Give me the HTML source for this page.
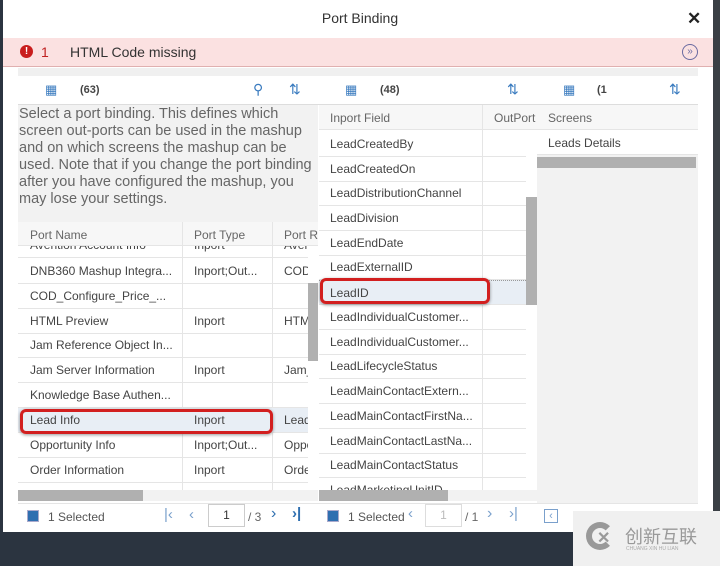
<!DOCTYPE html>
<html><head><meta charset="utf-8"><style>
*{margin:0;padding:0;box-sizing:border-box}
body{width:720px;height:566px;overflow:hidden;background:#2b3440;font-family:"Liberation Sans",sans-serif;position:relative;color:#333}
.a{position:absolute;white-space:nowrap}
.dlg{left:3px;top:0;width:710px;height:532px;background:#fff}
.t{font-size:12px;color:#444;white-space:nowrap}
.row{position:absolute;height:25px;border-bottom:1px solid #e5e5e5}
.hd{color:#666;font-size:12px}
.ico{color:#3a7bbf;font-size:13px}
</style></head><body>
<div class="a" style="left:713px;top:0;width:7px;height:532px;background:#3a3f45"></div>
<div class="a dlg"></div>
<div class="a" style="top:10px;width:360px;text-align:center;left:180px;font-size:14px;color:#333">Port Binding</div>
<div class="a" style="left:687px;top:9px;font-size:17px;font-weight:bold;color:#222">✕</div>
<div class="a" style="left:3px;top:38px;width:710px;height:29px;background:#fbe1e1;border-bottom:1px solid #e0b0b0"></div>
<div class="a" style="left:20px;top:45px;width:13px;height:13px;border-radius:50%;background:#c91d1d;color:#fff;font-size:10px;font-weight:bold;text-align:center;line-height:13px">!</div>
<div class="a" style="left:41px;top:44px;font-size:14px;color:#c02020">1</div>
<div class="a" style="left:70px;top:44px;font-size:14px;color:#333">HTML Code missing</div>
<div class="a" style="left:682px;top:44px;width:16px;height:16px;border:1px solid #6a6aa0;border-radius:50%;font-size:10px;color:#6a6aa0;text-align:center;line-height:14px">»</div>
<div class="a" style="left:18px;top:68px;width:680px;height:8px;background:#f0f0f0"></div>
<div class="a ico" style="left:45px;top:82px">▦</div>
<div class="a t" style="left:80px;top:84px;font-weight:bold;font-size:11px">(63)</div>
<div class="a ico" style="left:253px;top:81px;font-size:14px">⚲</div>
<div class="a ico" style="left:289px;top:81px;font-size:14px">⇅</div>
<div class="a ico" style="left:345px;top:82px">▦</div>
<div class="a t" style="left:380px;top:84px;font-weight:bold;font-size:11px">(48)</div>
<div class="a ico" style="left:507px;top:81px;font-size:14px">⇅</div>
<div class="a ico" style="left:563px;top:82px">▦</div>
<div class="a t" style="left:597px;top:84px;font-weight:bold;font-size:11px">(1</div>
<div class="a ico" style="left:669px;top:81px;font-size:14px">⇅</div>
<div class="a" style="left:18px;top:104px;width:680px;border-top:1px solid #ddd"></div>
<div class="a" style="left:18px;top:105px;width:300px;height:117px;background:#f2f2f2"></div>
<div class="a" style="left:19px;top:106px;width:300px;font-size:14.5px;line-height:17px;color:#666;white-space:normal">Select a port binding. This defines which screen out-ports can be used in the mashup and on which screens the mashup can be used. Note that if you change the port binding after you have configured the mashup, you may lose your settings.</div>
<div class="a" style="left:18px;top:222px;width:300px;height:268px;overflow:hidden;background:#fff">
<div class="row" style="left:0;top:0;width:300px;height:24px;background:#f7f7f7"></div>
<div class="a hd" style="left:12px;top:6px">Port Name</div><div class="a hd" style="left:176px;top:6px">Port Type</div><div class="a hd" style="left:266px;top:6px">Port Re</div>
<div class="a" style="left:164px;top:0;height:268px;border-left:1px solid #e5e5e5"></div>
<div class="a" style="left:254px;top:0;height:268px;border-left:1px solid #e5e5e5"></div>
<div class="a" style="left:0;top:24px;width:290px;height:244px;overflow:hidden">
<div class="row" style="top:-13px;width:290px"><span class="a t" style="left:12px;top:5px">Avention Account Info</span><span class="a t" style="left:176px;top:5px">Inport</span><span class="a t" style="left:266px;top:5px">Aven</span></div>
<div class="row" style="top:13px;width:290px"><span class="a t" style="left:12px;top:5px">DNB360 Mashup Integra...</span><span class="a t" style="left:176px;top:5px">Inport;Out...</span><span class="a t" style="left:266px;top:5px">COD</span></div>
<div class="row" style="top:38px;width:290px"><span class="a t" style="left:12px;top:5px">COD_Configure_Price_...</span></div>
<div class="row" style="top:63px;width:290px"><span class="a t" style="left:12px;top:5px">HTML Preview</span><span class="a t" style="left:176px;top:5px">Inport</span><span class="a t" style="left:266px;top:5px">HTM</span></div>
<div class="row" style="top:87px;width:290px"><span class="a t" style="left:12px;top:5px">Jam Reference Object In...</span></div>
<div class="row" style="top:112px;width:290px"><span class="a t" style="left:12px;top:5px">Jam Server Information</span><span class="a t" style="left:176px;top:5px">Inport</span><span class="a t" style="left:266px;top:5px">Jam_</span></div>
<div class="row" style="top:137px;width:290px"><span class="a t" style="left:12px;top:5px">Knowledge Base Authen...</span></div>
<div class="row" style="top:162px;width:290px;background:#e8eef5"><span class="a t" style="left:12px;top:5px">Lead Info</span><span class="a t" style="left:176px;top:5px">Inport</span><span class="a t" style="left:266px;top:5px">Lead</span></div>
<div class="row" style="top:187px;width:290px"><span class="a t" style="left:12px;top:5px">Opportunity Info</span><span class="a t" style="left:176px;top:5px">Inport;Out...</span><span class="a t" style="left:266px;top:5px">Oppo</span></div>
<div class="row" style="top:212px;width:290px"><span class="a t" style="left:12px;top:5px">Order Information</span><span class="a t" style="left:176px;top:5px">Inport</span><span class="a t" style="left:266px;top:5px">Orde</span></div>
</div></div>
<div class="a" style="left:308px;top:283px;width:10px;height:78px;background:#b0b0b0"></div>
<div class="a" style="left:18px;top:490px;width:300px;height:11px;background:#f2f2f2"></div>
<div class="a" style="left:18px;top:490px;width:125px;height:11px;background:#b0b0b0"></div>
<div class="a" style="left:20px;top:409px;width:253px;height:25px;border:3px solid #d21f1f;border-radius:6px;box-shadow:0 1px 3px rgba(0,0,0,.4)"></div>
<div class="a" style="left:319px;top:105px;width:218px;height:385px;overflow:hidden;background:#fff">
<div class="row" style="left:0;top:0;width:218px;height:25px;background:#f7f7f7"></div>
<div class="a hd" style="left:11px;top:6px">Inport Field</div><div class="a hd" style="left:175px;top:6px">OutPort</div>
<div class="a" style="left:163px;top:0;height:385px;border-left:1px solid #e5e5e5"></div>
<div class="a" style="left:0;top:27px;width:207px;height:358px">
<div class="row" style="top:0;width:207px"><span class="a t" style="left:11px;top:5px">LeadCreatedBy</span></div>
<div class="row" style="top:25px;width:207px"><span class="a t" style="left:11px;top:5px">LeadCreatedOn</span></div>
<div class="row" style="top:49px;width:207px"><span class="a t" style="left:11px;top:5px">LeadDistributionChannel</span></div>
<div class="row" style="top:74px;width:207px"><span class="a t" style="left:11px;top:5px">LeadDivision</span></div>
<div class="row" style="top:99px;width:207px"><span class="a t" style="left:11px;top:5px">LeadEndDate</span></div>
<div class="row" style="top:123px;width:207px"><span class="a t" style="left:11px;top:5px">LeadExternalID</span></div>
<div class="row" style="top:148px;width:207px;background:#e8eef5;border-top:1px dotted #999"><span class="a t" style="left:11px;top:5px">LeadID</span></div>
<div class="row" style="top:173px;width:207px"><span class="a t" style="left:11px;top:5px">LeadIndividualCustomer...</span></div>
<div class="row" style="top:198px;width:207px"><span class="a t" style="left:11px;top:5px">LeadIndividualCustomer...</span></div>
<div class="row" style="top:222px;width:207px"><span class="a t" style="left:11px;top:5px">LeadLifecycleStatus</span></div>
<div class="row" style="top:247px;width:207px"><span class="a t" style="left:11px;top:5px">LeadMainContactExtern...</span></div>
<div class="row" style="top:272px;width:207px"><span class="a t" style="left:11px;top:5px">LeadMainContactFirstNa...</span></div>
<div class="row" style="top:297px;width:207px"><span class="a t" style="left:11px;top:5px">LeadMainContactLastNa...</span></div>
<div class="row" style="top:321px;width:207px"><span class="a t" style="left:11px;top:5px">LeadMainContactStatus</span></div>
<div class="row" style="top:346px;width:207px"><span class="a t" style="left:11px;top:5px">LeadMarketingUnitID</span></div>
</div>
<div class="a" style="left:207px;top:92px;width:11px;height:108px;background:#b0b0b0"></div>
</div>
<div class="a" style="left:319px;top:490px;width:218px;height:11px;background:#f2f2f2"></div>
<div class="a" style="left:319px;top:490px;width:129px;height:11px;background:#b0b0b0"></div>
<div class="a" style="left:320px;top:278px;width:170px;height:26px;border:3px solid #d21f1f;border-radius:6px;box-shadow:0 1px 3px rgba(0,0,0,.4)"></div>
<div class="a" style="left:537px;top:105px;width:161px;height:398px;background:#f2f2f2"></div>
<div class="a" style="left:537px;top:105px;width:161px;height:25px;background:#f7f7f7;border-bottom:1px solid #e5e5e5"></div>
<div class="a hd" style="left:548px;top:111px">Screens</div>
<div class="a" style="left:537px;top:130px;width:161px;height:25px;background:#fff;border-bottom:1px solid #e5e5e5"></div>
<div class="a t" style="left:548px;top:136px">Leads Details</div>
<div class="a" style="left:537px;top:157px;width:159px;height:11px;background:#b0b0b0"></div>
<div class="a" style="left:18px;top:503px;width:680px;border-top:1px solid #e5e5e5"></div>
<div class="a" style="left:27px;top:510px;width:12px;height:12px;background:#2f6fb0;border:1px solid #aac"></div>
<div class="a t" style="left:48px;top:510px;color:#555">1 Selected</div>
<div class="a" style="left:164px;top:506px;font-size:15px;color:#7aa0cc">|‹</div>
<div class="a" style="left:189px;top:506px;font-size:15px;color:#7aa0cc">‹</div>
<div class="a" style="left:208px;top:504px;width:37px;height:23px;border:1px solid #ccc;font-size:12px;text-align:center;line-height:21px">1</div>
<div class="a t" style="left:248px;top:510px;color:#666">/ 3</div>
<div class="a" style="left:271px;top:505px;font-size:16px;color:#2f6fb0">›</div>
<div class="a" style="left:292px;top:505px;font-size:15px;color:#2f6fb0;font-weight:bold">›|</div>
<div class="a" style="left:327px;top:510px;width:12px;height:12px;background:#2f6fb0;border:1px solid #aac"></div>
<div class="a t" style="left:348px;top:510px;color:#555">1 Selected</div>
<div class="a" style="left:408px;top:505px;font-size:15px;color:#7aa0cc">‹</div>
<div class="a" style="left:425px;top:504px;width:37px;height:23px;border:1px solid #ddd;font-size:12px;text-align:center;line-height:21px;color:#bbb">1</div>
<div class="a t" style="left:465px;top:510px;color:#666">/ 1</div>
<div class="a" style="left:487px;top:505px;font-size:16px;color:#7aa0cc">›</div>
<div class="a" style="left:509px;top:505px;font-size:15px;color:#7aa0cc">›|</div>
<div class="a" style="left:544px;top:509px;width:14px;height:14px;border:1px solid #7aa0cc;font-size:11px;color:#7aa0cc;text-align:center;line-height:12px">‹</div>
<div class="a" style="left:573px;top:511px;width:147px;height:55px;background:#f0f0f0"></div>
<div class="a" style="left:586px;top:522px;width:28px;height:28px;border:6px solid #999;border-radius:50%;border-right-color:transparent"></div>
<div class="a" style="left:597px;top:528px;font-size:16px;font-weight:bold;color:#999">✕</div>
<div class="a" style="left:625px;top:523px;font-size:18px;color:#999;font-family:'Noto Sans CJK SC',sans-serif">创新互联</div>
<div class="a" style="left:626px;top:546px;font-size:5px;color:#aaa">CHUANG XIN HU LIAN</div>
</body></html>
